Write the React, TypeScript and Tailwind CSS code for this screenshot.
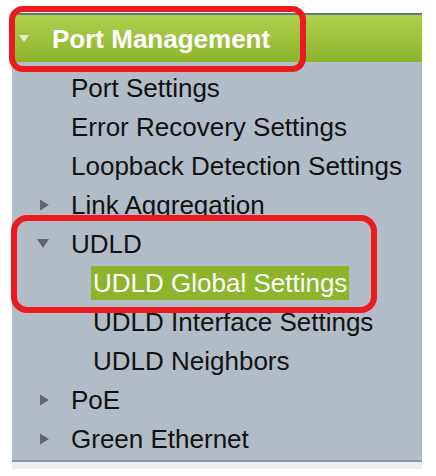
import React from 'react';

type Item = {
  label: string;
  indent: 0 | 1;
  arrow?: 'right' | 'down';
  active?: boolean;
};

const items: Item[] = [
  { label: "Port Settings", indent: 0 },
  { label: "Error Recovery Settings", indent: 0 },
  { label: "Loopback Detection Settings", indent: 0 },
  { label: "Link Aggregation", indent: 0, arrow: "right" },
  { label: "UDLD", indent: 0, arrow: "down" },
  { label: "UDLD Global Settings", indent: 1, active: true },
  { label: "UDLD Interface Settings", indent: 1 },
  { label: "UDLD Neighbors", indent: 1 },
  { label: "PoE", indent: 0, arrow: "right" },
  { label: "Green Ethernet", indent: 0, arrow: "right" },
];

const Arrow = ({ dir, color }: { dir: 'right' | 'down'; color: string }) =>
  dir === "right" ? (
    <svg width="9" height="12" viewBox="0 0 9 12">
      <path d="M0 0.5 L9 6 L0 11.5 Z" fill={color} />
    </svg>
  ) : (
    <svg width="12" height="9" viewBox="0 0 12 9">
      <path d="M0 0 L12 0 L6 9 Z" fill={color} />
    </svg>
  );

const App: React.FC = () => {
  return (
    <div
      className="relative h-[476px] w-[436px] overflow-hidden bg-white pt-[13px]"
      style={{ fontFamily: '"Liberation Sans", Arial, Helvetica, sans-serif' }}
    >
      <div className="ml-[12px] w-[410px] border-t-2 border-[#6b7580] bg-[#b2bcc6]">
        {/* header */}
        <div className="flex h-[47px] items-center bg-gradient-to-b from-[#aed04e] to-[#8db52c]">
          <div className="ml-[7px] w-[33px]">
            <svg width="10" height="7" viewBox="0 0 10 7">
              <path d="M0 0 L10 0 L5 7 Z" fill="#e3edcc" />
            </svg>
          </div>
          <span className="text-[26px] font-bold leading-none text-white">Port Management</span>
        </div>

        <div className="flex flex-col pt-[6px] pb-[2px]">
          {items.map((it) => (
            <div key={it.label} className="flex h-[39px] items-center">
              <div className="flex w-[59px] justify-end pr-[22px]">
                {it.arrow && <Arrow dir={it.arrow} color="#63676b" />}
              </div>
              <span
                className={
                  it.indent === 1
                    ? it.active
                      ? "ml-[20px] bg-[#8db42b] px-[2px] py-[3px] text-[26px] leading-[28px] text-white"
                      : "ml-[22px] text-[26px] leading-[28px] text-[#111]"
                    : "text-[26px] leading-[28px] text-[#111]"
                }
              >
                {it.label}
              </span>
            </div>
          ))}
        </div>
        <div className="h-[2px] bg-[#8c959f]" />
      </div>
      <div className="ml-[12px] h-[7px] w-[410px] bg-[#eceeef]" />

      {/* red callouts */}
      <div className="absolute left-[9px] top-[6px] h-[66px] w-[297px] rounded-[14px] border-[6px] border-[#ea1a1f]" />
      <div className="absolute left-[11px] top-[215px] h-[98px] w-[366px] rounded-[16px] border-[6px] border-[#ea1a1f]" />
    </div>
  );
};

export default App;
